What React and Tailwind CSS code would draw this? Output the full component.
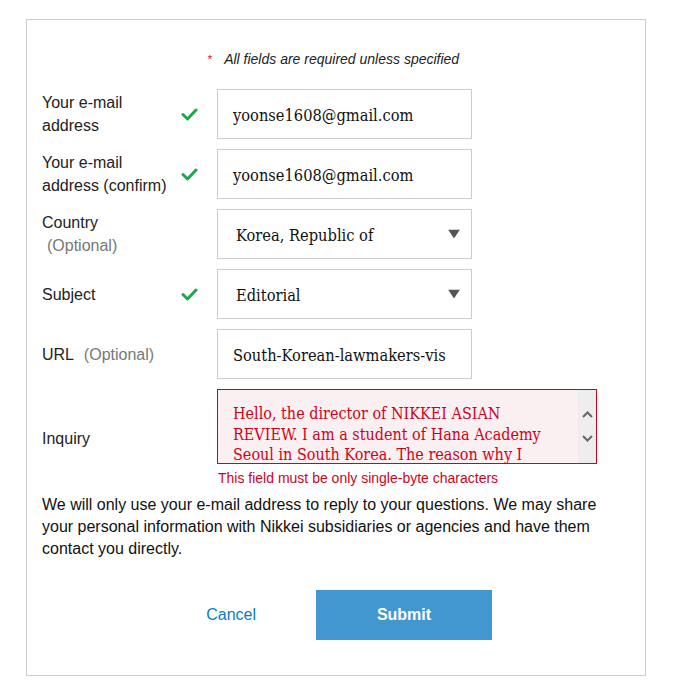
import React from 'react'

const Check = () => (
  <svg width="17" height="13" viewBox="0 0 17 13" className="shrink-0">
    <path d="M2 6.5 L6.5 11 L15 2" fill="none" stroke="#1ea84b" strokeWidth="3" strokeLinecap="round" strokeLinejoin="round" />
  </svg>
)

const Caret = () => (
  <svg width="12" height="9" viewBox="0 0 12 9" className="absolute right-[11px] top-1/2 -translate-y-1/2">
    <path d="M0 0 H12 L6 9 Z" fill="#555" />
  </svg>
)

const Row = ({ label, check, children, top }) => (
  <div className={top ? "flex items-start" : "flex items-center"}>
    <div className={"w-[175px] flex items-center justify-between pr-[19px] " + (top ? "mt-[38px]" : "")}>
      <div className="text-[16px] leading-[23px] text-[#222]">{label}</div>
      {check ? <Check /> : null}
    </div>
    {children}
  </div>
)

const serif = "font-['DejaVu_Serif_Condensed','DejaVu_Serif',serif]"
const fieldCls = "w-[255px] h-[50px] border border-[#cccccc] bg-white flex items-center pl-[15px] pt-[4px] text-[16.3px] text-[#111] overflow-hidden whitespace-nowrap " + serif

export default function App() {
  return (
    <div className="bg-white w-[678px] h-[689px] pt-[19px] pl-[26px] font-['Liberation_Sans',Arial,sans-serif]">
      <div className="w-[620px] h-[657px] border border-[#cccccc] pl-[15px] pt-[29px]">
        <div className="flex justify-center items-center gap-[12px] text-[14px] italic text-[#222] pr-[20px]">
          <span className="text-[#d0021b] not-italic text-[11px]">*</span>
          <span>All fields are required unless specified</span>
        </div>

        <div className="mt-[19px] flex flex-col gap-[10px]">
          <Row label={<>Your e-mail<br />address</>} check>
            <div className={fieldCls}>yoonse1608@gmail.com</div>
          </Row>
          <Row label={<>Your e-mail<br />address (confirm)</>} check>
            <div className={fieldCls}>yoonse1608@gmail.com</div>
          </Row>
          <Row label={<>Country<br /><span className="text-[#777] pl-[5px]">(Optional)</span></>}>
            <div className={fieldCls + " relative pl-[18px]"}>Korea, Republic of<Caret /></div>
          </Row>
          <Row label="Subject" check>
            <div className={fieldCls + " relative pl-[18px] border-[#555]"}>Editorial<Caret /></div>
          </Row>
          <Row label={<>URL <span className="text-[#777] pl-[6px]">(Optional)</span></>}>
            <div className={fieldCls + " pl-[14px]"}>South-Korean-lawmakers-vis</div>
          </Row>
          <div>
            <Row label="Inquiry" top>
              <div className="w-[380px] h-[75px] border border-[#d0021b] bg-[#fbf0f1] flex overflow-hidden">
                <div className={"flex-1 pl-[15px] pt-[14px] text-[16px] leading-[20.5px] text-[#d0021b] whitespace-nowrap " + serif}>
                  Hello, the director of NIKKEI ASIAN<br />
                  REVIEW. I am a student of Hana Academy<br />
                  Seoul in South Korea. The reason why I
                </div>
                <div className="w-[18px] bg-[#eeeeee] flex flex-col items-center justify-center gap-[17px]">
                  <svg width="11" height="7" viewBox="0 0 11 7"><path d="M1 6 L5.5 1.5 L10 6" fill="none" stroke="#666" strokeWidth="2" /></svg>
                  <svg width="11" height="7" viewBox="0 0 11 7"><path d="M1 1 L5.5 5.5 L10 1" fill="none" stroke="#666" strokeWidth="2" /></svg>
                </div>
              </div>
            </Row>
            <div className="pl-[176px] mt-[6px] text-[14px] text-[#d0021b] leading-[16px]">
              This field must be only single-byte characters
            </div>
          </div>
        </div>

        <p className="mt-[8px] text-[16px] leading-[22px] text-[#111] pr-[20px]">
          We will only use your e-mail address to reply to your questions. We may share your personal information with Nikkei subsidiaries or agencies and have them contact you directly.
        </p>

        <div className="mt-[30px] flex items-center">
          <div className="w-[274px] text-right pr-[60px] text-[16px] text-[#0a7cc4]">Cancel</div>
          <button className="w-[176px] h-[50px] bg-[#4297d0] text-white font-bold text-[16px]">Submit</button>
        </div>
      </div>
    </div>
  )
}
